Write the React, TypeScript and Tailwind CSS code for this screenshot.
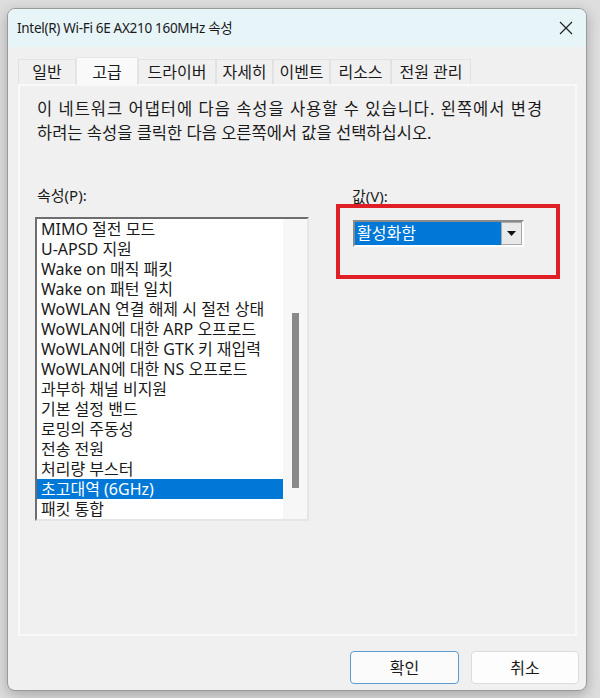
import React from 'react';

const font = { fontFamily: '"Noto Sans", "Noto Sans CJK KR", sans-serif' };

const tabs = [
  { label: '일반', w: 'w-[58px]' },
  { label: '고급', w: 'w-[62px]', active: true },
  { label: '드라이버', w: 'w-[78px]' },
  { label: '자세히', w: 'w-[57px]' },
  { label: '이벤트', w: 'w-[57px]' },
  { label: '리소스', w: 'w-[61px]' },
  { label: '전원 관리', w: 'w-[80px]' },
];

const items = [
  'MIMO 절전 모드',
  'U-APSD 지원',
  'Wake on 매직 패킷',
  'Wake on 패턴 일치',
  'WoWLAN 연결 해제 시 절전 상태',
  'WoWLAN에 대한 ARP 오프로드',
  'WoWLAN에 대한 GTK 키 재입력',
  'WoWLAN에 대한 NS 오프로드',
  '과부하 채널 비지원',
  '기본 설정 밴드',
  '로밍의 주동성',
  '전송 전원',
  '처리량 부스터',
  '초고대역 (6GHz)',
  '패킷 통합',
];

export default function App() {
  return (
    <div className="w-[600px] h-[698px] bg-[#dedede] pt-[8px] pl-[7px] text-[#1a1a1a]" style={font}>
      <div className="w-[580px] h-[683px] rounded-[8px] border border-[#9a9a9a] bg-[#f0f0f0] overflow-hidden flex flex-col shadow-[0_4px_14px_rgba(0,0,0,0.25)]">
        {/* Title bar */}
        <div className="h-[38px] bg-[#e7f4f8] flex items-center justify-between pl-[9px] pr-[12px]">
          <span className="text-[13.5px] tracking-[-0.3px]">Intel(R) Wi-Fi 6E AX210 160MHz 속성</span>
          <svg width="14" height="14" viewBox="0 0 14 14" className="mr-[1px]">
            <path d="M1 1 L13 13 M13 1 L1 13" stroke="#222" strokeWidth="1.2" />
          </svg>
        </div>

        {/* Body */}
        <div className="flex flex-col pl-[10px] pt-[10px]">
          {/* Tabs */}
          <div className="flex items-end h-[27px] text-[16px]">
            {tabs.map((t) =>
              t.active ? (
                <div
                  key={t.label}
                  className={`${t.w} h-[28px] -mb-[1px] bg-[#f9f9f9] border border-b-0 border-[#e6e6e6] flex items-center justify-center relative z-10`}
                >
                  {t.label}
                </div>
              ) : (
                <div
                  key={t.label}
                  className={`${t.w} h-[25px] bg-[#f0f0f0] border border-b-0 border-[#e2e2e2] flex items-center justify-center`}
                >
                  {t.label}
                </div>
              )
            )}
          </div>

          {/* Panel */}
          <div className="w-[559px] h-[552px] border-2 border-[#f9f9f9] bg-[#f0f0f0] pl-[17px] pt-[11px]">
            <p className="text-[16.5px] leading-[24px]">
              <span className="tracking-[1px]">이 네트워크 어댑터에 다음 속성을 사용할 수 있습니다. 왼쪽에서 변경</span>
              <br />
              하려는 속성을 클릭한 다음 오른쪽에서 값을 선택하십시오.
            </p>

            <div className="flex mt-[40px]">
              {/* Properties list */}
              <div className="flex flex-col -ml-[2px]">
                <span className="text-[15px] leading-[20px] pl-[2px]">속성(P):</span>
                <div className="mt-[12px] w-[274px] h-[304px] border-2 border-t-[#6e6e6e] border-l-[#6e6e6e] border-r-[#e6e6e6] border-b-[#e6e6e6] bg-white flex">
                  <div className="flex-1 flex flex-col text-[16px]">
                    {items.map((it) => (
                      <div
                        key={it}
                        className={`h-[20px] leading-[20px] pl-[4px] whitespace-nowrap ${
                          it.startsWith('초고대역') ? 'bg-[#0078d7] text-white' : ''
                        }`}
                      >
                        {it}
                      </div>
                    ))}
                  </div>
                  <div className="w-[24px] bg-[#f7f7f7] flex justify-center">
                    <div className="w-[7px] h-[175px] mt-[94px] bg-[#898989]" />
                  </div>
                </div>
              </div>

              {/* Value */}
              <div className="flex flex-col ml-[44px]">
                <span className="text-[15px] leading-[20px] mt-[1px] mb-[2px] -ml-[1px]">값(V):</span>
                <div className="relative mt-[12px] w-[171px] h-[27px] border-2 border-t-[#8a8a8a] border-l-[#8a8a8a] border-r-white border-b-white bg-white flex">
                  <div className="flex-1 bg-[#0078d7] text-white text-[16px] leading-[23px] pl-[2px]">활성화함</div>
                  <div className="w-[21px] bg-[#e9e9e9] border border-[#a8a8a8] flex items-center justify-center">
                    <svg width="9" height="5" viewBox="0 0 9 5">
                      <path d="M0 0 H9 L4.5 5 Z" fill="#111" />
                    </svg>
                  </div>
                  {/* annotation box */}
                  <div className="absolute -left-[19px] -top-[18px] w-[224px] h-[75px] border-4 border-[#e01e26] pointer-events-none" />
                </div>
              </div>
            </div>
          </div>

          {/* Buttons */}
          <div className="flex justify-end gap-[12px] pr-[7px] mt-[15px] text-[16px]">
            <button className="w-[109px] h-[33px] rounded-[4px] bg-[#fbfbfb] border border-[#5a9bd0]">확인</button>
            <button className="w-[108px] h-[33px] rounded-[4px] bg-[#fdfdfd] border border-[#dcdcdc]">취소</button>
          </div>
        </div>
      </div>
    </div>
  );
}
